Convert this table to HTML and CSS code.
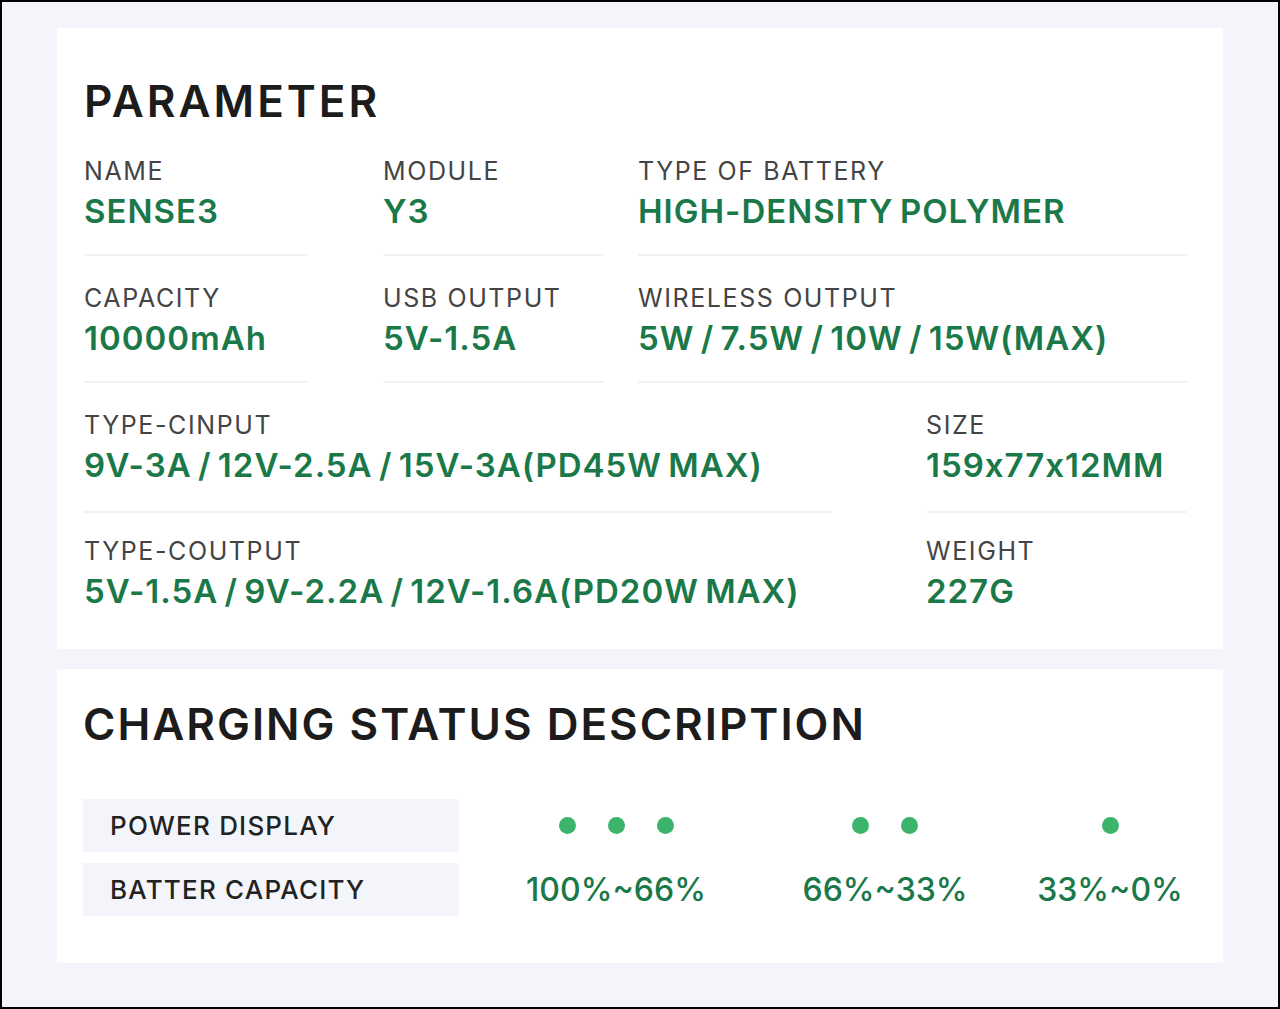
FILE: index.html
```html
<!DOCTYPE html>
<html lang="en">
<head>
    <meta charset="UTF-8">
    <meta name="viewport" content="width=device-width, initial-scale=1.0">
    <title>Parameter - Sense3</title>
    <link rel="stylesheet" href="styles.css">
</head>
<body>
    <div class="frame">
        <section class="card params">
            <h1 class="card-title">PARAMETER</h1>

            <div class="spec-row">
                <div class="spec w-name">
                    <div class="spec-label">NAME</div>
                    <div class="spec-value">SENSE3</div>
                </div>
                <div class="spec w-module">
                    <div class="spec-label">MODULE</div>
                    <div class="spec-value">Y3</div>
                </div>
                <div class="spec w-battery">
                    <div class="spec-label">TYPE OF BATTERY</div>
                    <div class="spec-value">HIGH-DENSITY POLYMER</div>
                </div>
            </div>

            <div class="spec-row">
                <div class="spec w-name">
                    <div class="spec-label">CAPACITY</div>
                    <div class="spec-value">10000mAh</div>
                </div>
                <div class="spec w-module">
                    <div class="spec-label">USB OUTPUT</div>
                    <div class="spec-value">5V-1.5A</div>
                </div>
                <div class="spec w-battery">
                    <div class="spec-label">WIRELESS OUTPUT</div>
                    <div class="spec-value">5W / 7.5W / 10W / 15W(MAX)</div>
                </div>
            </div>

            <div class="spec-row">
                <div class="spec w-wide">
                    <div class="spec-label">TYPE-CINPUT</div>
                    <div class="spec-value">9V-3A / 12V-2.5A / 15V-3A(PD45W MAX)</div>
                </div>
                <div class="spec w-side">
                    <div class="spec-label">SIZE</div>
                    <div class="spec-value">159x77x12MM</div>
                </div>
            </div>

            <div class="spec-row last">
                <div class="spec w-wide">
                    <div class="spec-label">TYPE-COUTPUT</div>
                    <div class="spec-value">5V-1.5A / 9V-2.2A / 12V-1.6A(PD20W MAX)</div>
                </div>
                <div class="spec w-side">
                    <div class="spec-label">WEIGHT</div>
                    <div class="spec-value">227G</div>
                </div>
            </div>
        </section>

        <section class="card status">
            <h2 class="card-title">CHARGING STATUS DESCRIPTION</h2>

            <div class="status-table">
                <div class="status-label">POWER DISPLAY</div>
                <div class="dots"><span class="dot"></span><span class="dot"></span><span class="dot"></span></div>
                <div class="dots"><span class="dot"></span><span class="dot"></span></div>
                <div class="dots"><span class="dot"></span></div>

                <div class="status-label">BATTER CAPACITY</div>
                <div class="percent">100%~66%</div>
                <div class="percent">66%~33%</div>
                <div class="percent">33%~0%</div>
            </div>
        </section>
    </div>
</body>
</html>
```

FILE: styles.css
```css
* {
    box-sizing: border-box;
}

body {
    margin: 0;
    background-color: #f3f5fa;
    font-family: Inter, 'Open Sans', sans-serif;
}

.frame {
    height: 1009px;
    border: 2px solid #000;
    padding: 26px 55px 0;
}

.card {
    background-color: #fff;
}

.card-title {
    margin: 0;
    font-size: 44px;
    line-height: 52px;
    font-weight: 600;
    letter-spacing: 3px;
    color: #1c1c1c;
}

/* parameter card */
.params {
    padding: 47px 36px 15px 27px;
}

.params .card-title {
    margin-bottom: 29px;
}

.spec-row {
    display: flex;
}

.spec {
    flex: none;
    padding: 27px 0 23px;
    border-bottom: 2px solid #f1f2f4;
}

.spec-row:first-of-type .spec {
    padding-top: 0;
}

.spec-row:nth-of-type(3) .spec {
    padding-bottom: 26px;
}

.spec-row.last .spec {
    padding-top: 23px;
    border-bottom: 0;
}

.w-name {
    width: 223px;
    margin-right: 76px;
}

.w-module {
    width: 221px;
    margin-right: 34px;
}

.w-battery {
    flex: 1;
}

.w-wide {
    width: 748px;
    margin-right: 94px;
}

.w-side {
    flex: 1;
}

.spec-label {
    font-size: 25px;
    line-height: 30px;
    font-weight: 400;
    letter-spacing: 1.6px;
    color: #444;
}

.spec-value {
    margin-top: 5px;
    font-size: 33px;
    line-height: 40px;
    font-weight: 600;
    letter-spacing: 1px;
    word-spacing: -3px;
    color: #1a7849;
    white-space: nowrap;
}

/* charging status card */
.status {
    margin-top: 20px;
    padding: 29px 0 47px 26px;
}

.status .card-title {
    letter-spacing: 2px;
}

.status-table {
    display: grid;
    grid-template-columns: 376px 314px 224px 226px;
    grid-template-rows: 53px 53px;
    row-gap: 11px;
    margin-top: 49px;
}

.status-label {
    display: flex;
    align-items: center;
    padding-left: 27px;
    background-color: #f3f5fa;
    font-size: 26px;
    font-weight: 500;
    letter-spacing: 1.2px;
    color: #222;
}

.dots {
    display: flex;
    justify-content: center;
    align-items: center;
    gap: 32px;
}

.dot {
    width: 17px;
    height: 17px;
    border-radius: 50%;
    background-color: #3cb46c;
}

.percent {
    display: flex;
    justify-content: center;
    align-items: center;
    font-size: 32px;
    font-weight: 500;
    color: #1a7849;
}
```
